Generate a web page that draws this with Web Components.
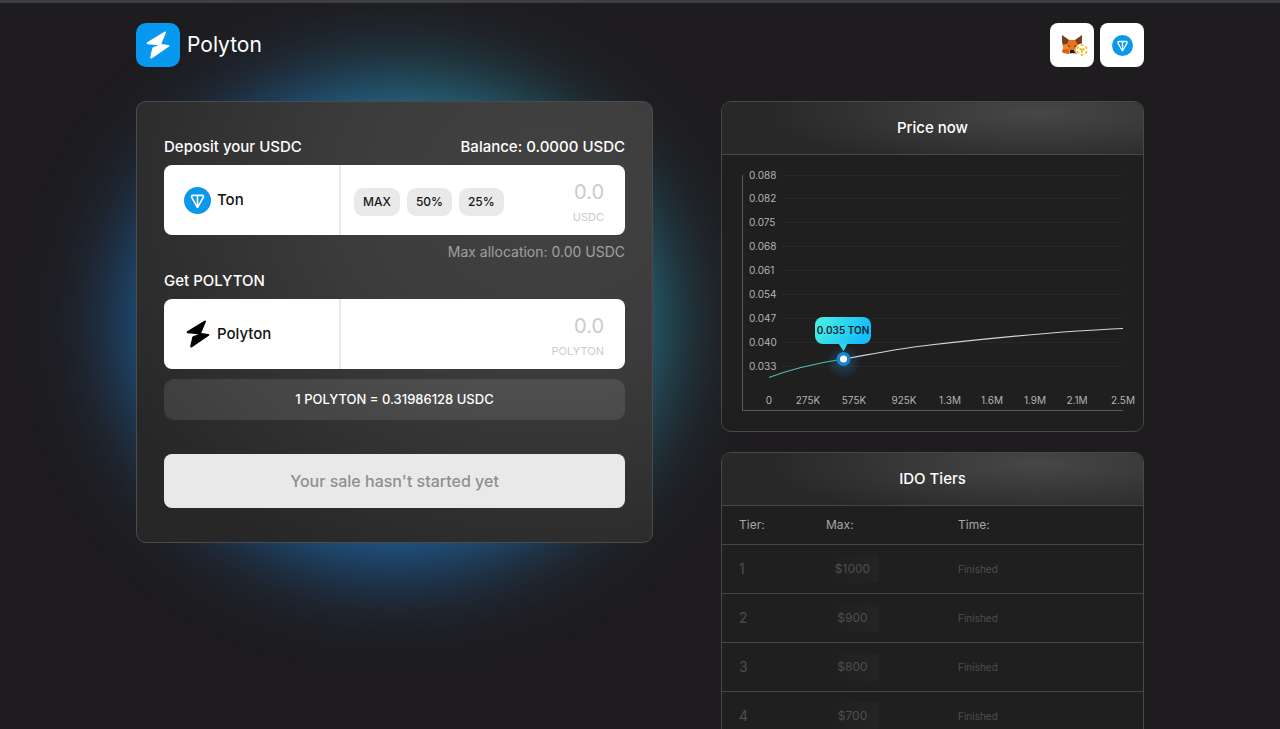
<!DOCTYPE html>
<html lang="en">
<head>
<meta charset="utf-8">
<meta name="viewport" content="width=device-width, initial-scale=1">
<title>Polyton</title>
<style>
  html { background: #1e1c1f; scrollbar-width: none; }
  body { margin: 0; font: 500 15px/24px Inter, "Open Sans", sans-serif; color: #fff; }
</style>
</head>
<body>
<polyton-app></polyton-app>

<template id="polyton-app">
  <style>
    :host { display: block; border-top: 3px solid #3f3e41; overflow: hidden; isolation: isolate; }
    .page { width: calc(100% - 48px); max-width: 1008px; margin: 0 auto; padding: 20px 0 24px; }
    main { display: grid; grid-template-columns: minmax(0, 517fr) minmax(0, 423fr); gap: 68px; align-items: start; margin-top: 34px; }
    .side { display: grid; gap: 20px; }
    @media (max-width: 760px) { main { grid-template-columns: minmax(0, 1fr); gap: 24px; } }
  </style>
  <div class="page">
    <site-header></site-header>
    <main>
      <swap-card></swap-card>
      <div class="side">
        <info-card heading="Price now"><price-chart></price-chart></info-card>
        <info-card heading="IDO Tiers"><tier-table></tier-table></info-card>
      </div>
    </main>
  </div>
</template>

<template id="site-header">
  <style>
    :host { display: block; }
    header, a, nav { display: flex; align-items: center; }
    header { justify-content: space-between; }
    a { gap: 7px; color: #fff; text-decoration: none; font-size: 21px; line-height: 28px; font-weight: 400; }
    .mark { display: grid; place-items: center; width: 44px; height: 44px; border-radius: 10px; background: #0699ef; }
    nav { gap: 6px; }
    button { display: grid; place-items: center; width: 44px; height: 44px; padding: 0; border: 0; border-radius: 8px; background: #fff; }
  </style>
  <header>
    <a href="#"><span class="mark"><bolt-icon></bolt-icon></span>Polyton</a>
    <nav aria-label="Wallets">
      <button type="button" aria-label="MetaMask">
        <svg width="32" height="24" viewBox="0 0 32 24" aria-hidden="true">
          <path d="M6 3l7 4h6l7-4v8l-1 4-2 5-4 1h-5l-4-1-4-1 1-4z" fill="#e8791f"/>
          <path d="M6 2l7 5-2 4-4 1-1-3zM26 2l-7 5 2 4 4 1 1-3z" fill="#74401f"/>
          <path d="M7 12l5-1 3 3-2 5-6-1z" fill="#f28a2c"/>
          <path d="M12 11l1-4h6l2 4-2 8h-6z" fill="#e9741f"/>
          <path d="M6 17l5-1 3 2-1 3-6-1z" fill="#d9631b"/>
          <path d="M11 12l3 1-1 1zM21 12l-3 1 1 1z" fill="#34221d"/>
          <path d="M13 18l1-1h5v4h-5z" fill="#d5c4bb"/>
          <path d="M14 17h4l1 3h-5z" fill="#1e1a1c"/>
          <circle cx="26" cy="17" r="6.500" fill="#fff"/>
          <path d="M26 11.800l4.500 2.600v5.200L26 22.200l-4.500-2.600v-5.200z" fill="none" stroke="#efb90b" stroke-width="1.300" stroke-dasharray="3.200 2" stroke-dashoffset="1.600"/>
          <path d="M23.500 15.500l2.500 1.500 2.500-1.500M26 17v3" fill="none" stroke="#efb90b" stroke-width="1.700"/>
        </svg>
      </button>
      <button type="button" aria-label="TON wallet"><ton-icon style="--size:21px"></ton-icon></button>
    </nav>
  </header>
</template>

<template id="bolt-icon">
  <style>:host { display: block; height: 28px; } svg { display: block; }</style>
  <svg width="24" height="28" viewBox="0 0 24 28" aria-hidden="true">
    <path d="M18.400.800L1.200 11.200Q-.200 12.800 1.800 13.200L12.500 14.300 7 16.200Q6.300 16.500 6.200 17.500L4.200 26.300Q4.300 28.200 6 27.300L22.800 15.800Q24.200 14.300 22.200 13.900L15.300 13 19.900 1.800Q20 0 18.400.800Z" fill="currentColor"/>
  </svg>
</template>

<template id="ton-icon">
  <style>:host { display: block; } svg { display: block; width: var(--size, 27px); height: var(--size, 27px); }</style>
  <svg viewBox="0 0 56 56" aria-hidden="true">
    <circle cx="28" cy="28" r="28" fill="#0998ea"/>
    <path d="M37.560 15.630H18.440c-3.520 0-5.750 3.790-3.980 6.860l11.800 20.460c.770 1.340 2.700 1.340 3.470 0l11.800-20.460c1.780-3.060-.450-6.860-3.970-6.860ZM26.250 36.810l-2.570-4.970-6.200-11.090c-.410-.710.100-1.620.950-1.620h7.810v17.680Zm12.260-16.060-6.200 11.100-2.570 4.960V19.130h7.810c.860 0 1.360.910.960 1.620Z" fill="#fff"/>
  </svg>
</template>

<template id="swap-card">
  <style>
    :host { display: block; position: relative; }
    .glow { position: absolute; z-index: -1; left: 50%; top: 50%; width: 520px; height: 470px; transform: translate(-50%, -50%); border-radius: 50%; background: linear-gradient(60deg, #1f72bd 45%, #2a8aa6 70%); filter: blur(50px); }
    form { border: 1px solid #4a4b4c; border-radius: 10px; padding: 33px 27px 34px; background: radial-gradient(ellipse at 80% 20%, #424242, #3c3c3c 35%, #272727 85%); }
    .note { margin: 7px 0; text-align: right; font-size: 14px; line-height: 20px; font-weight: 400; color: #a0a0a0; }
    .rate { display: block; margin-top: 10px; border-radius: 10px; background: #ffffff1a; text-align: center; font-size: 13px; line-height: 41px; }
    .submit { display: block; width: 100%; height: 54px; margin-top: 34px; padding: 0; border: 0; border-radius: 8px; background: #e9e9e9; color: #8f8f8f; font: inherit; font-size: 16px; }
  </style>
  <div class="glow"></div>
  <form>
    <token-field label="Deposit your USDC" unit="USDC" token="Ton" presets="MAX,50%,25%">
      <ton-icon slot="icon"></ton-icon>
      <span slot="aside">Balance: 0.0000 USDC</span>
    </token-field>
    <p class="note">Max allocation: 0.00 USDC</p>
    <token-field label="Get POLYTON" unit="POLYTON" token="Polyton">
      <bolt-icon slot="icon"></bolt-icon>
    </token-field>
    <output class="rate">1 POLYTON = 0.31986128 USDC</output>
    <button class="submit" type="button" disabled>Your sale hasn't started yet</button>
  </form>
</template>

<template id="token-field">
  <style>
    :host { display: block; }
    .top { display: flex; justify-content: space-between; margin-bottom: 6px; }
    .box { display: flex; height: 70px; border-radius: 8px; background: #fff; color: #111; overflow: hidden; }
    .token { display: flex; align-items: center; gap: 6px; box-sizing: border-box; width: 177px; padding-left: 20px; border-right: 2px solid #e8e8e8; }
    .icon { display: grid; place-items: center; width: 27px; color: #000; }
    .amount { flex: 1; display: flex; align-items: center; min-width: 0; padding: 4px 21px 0 13px; }
    .presets { display: flex; gap: 7px; }
    .presets button { height: 28px; padding: 0 9px; border: 0; border-radius: 9px; background: #e9e9e9; color: #161616; font: inherit; font-size: 12px; }
    .value { flex: 1; min-width: 0; display: grid; justify-items: end; color: #cbcbcb; }
    input { width: 100%; height: 30px; padding: 0; border: 0; outline: 0; background: none; text-align: right; font: inherit; font-size: 20px; font-weight: 400; color: #111; }
    input::placeholder { color: #cbcbcb; opacity: 1; }
    .unit { font-size: 11px; line-height: 20px; font-weight: 400; }
  </style>
  <div class="top"><label for="value"></label><slot name="aside"></slot></div>
  <div class="box">
    <div class="token"><span class="icon"><slot name="icon"></slot></span><span class="name"></span></div>
    <div class="amount">
      <div class="presets"></div>
      <div class="value"><input id="value" inputmode="decimal" placeholder="0.0"><span class="unit"></span></div>
    </div>
  </div>
</template>

<template id="info-card">
  <style>
    :host { display: block; border: 1px solid #48484a; border-radius: 10px; background: #1f1f1f; overflow: hidden; }
    h2 { margin: 0; border-bottom: 1px solid #48484a; text-align: center; font-size: 15px; line-height: 52px; font-weight: 500; background: radial-gradient(ellipse 65% 110% at 75% 20%, #474747, #282828); }
  </style>
  <h2></h2>
  <slot></slot>
</template>

<template id="price-chart">
  <style>
    :host { display: block; }
    svg { display: block; width: 100%; height: auto; }
    text { font-size: 10px; font-weight: 400; fill: #b4b4b4; }
    .x text { text-anchor: middle; }
    .tip { font-weight: 600; fill: #0c2730; text-anchor: middle; }
  </style>
  <svg viewBox="0 0 421 276" role="img" aria-label="Price by tokens sold">
    <defs>
      <linearGradient id="bubble" x1="0" y1="0" x2="1" y2="0.300"><stop stop-color="#4bf3df"/><stop offset="1" stop-color="#16bdfa"/></linearGradient>
      <radialGradient id="halo"><stop stop-color="#1d87d0" stop-opacity=".4"/><stop offset="1" stop-color="#1d87d0" stop-opacity="0"/></radialGradient>
    </defs>
    <g class="grid" stroke="#272727"></g>
    <path d="M20.500 20V255.500H401" fill="none" stroke="#5a5a5a"/>
    <g class="y"></g>
    <g class="x"></g>
    <path d="M121 204C150 199 180 193 208 190C270 183 340 176 401 173.500" fill="none" stroke="#d6d6d6" stroke-width="1.200"/>
    <path d="M47 222.500C72 213 96 208 121 204" fill="none" stroke="#4cc5b4" stroke-width="1.200"/>
    <circle cx="121.500" cy="207" r="17" fill="url(#halo)"/>
    <rect x="93" y="162" width="56" height="27" rx="8" fill="url(#bubble)"/>
    <path d="M116.500 188.500h9l-3.500 7q-.500 1-1 0z" fill="#2cd6f1"/>
    <circle cx="121.500" cy="204" r="7" fill="#1d84cb"/>
    <circle cx="121.500" cy="204" r="3.500" fill="#fff"/>
    <text class="tip" x="121" y="179">0.035 TON</text>
  </svg>
</template>

<template id="tier-table">
  <style>
    :host { display: block; }
    table { width: 100%; border-collapse: separate; border-spacing: 0; table-layout: fixed; }
    th, td { box-sizing: border-box; padding: 0; text-align: left; border-bottom: 1px solid #454545; }
    th { height: 39px; font-size: 12px; font-weight: 400; color: #a6a6a6; }
    td { height: 49px; font-size: 14px; font-weight: 400; color: #4e4e4e; }
    th:first-child, td:first-child { width: 104px; padding-left: 17px; }
    th:nth-child(2) { width: 132px; }
    td:last-child { font-size: 10px; }
    .max { display: block; width: 53px; border-radius: 4px; text-align: center; font-size: 12px; line-height: 28px; background: linear-gradient(90deg, #1f1f1f, #242424); }
  </style>
  <table>
    <thead><tr><th scope="col">Tier:</th><th scope="col">Max:</th><th scope="col">Time:</th></tr></thead>
    <tbody></tbody>
  </table>
</template>

<script>
  class TemplateElement extends HTMLElement {
    constructor() {
      super();
      const template = document.getElementById(this.localName);
      this.attachShadow({ mode: "open" }).append(template.content.cloneNode(true));
    }
    find(selector) { return this.shadowRoot.querySelector(selector); }
  }

  class TokenField extends TemplateElement {
    connectedCallback() {
      this.find("label").textContent = this.getAttribute("label");
      this.find(".name").textContent = this.getAttribute("token");
      this.find(".unit").textContent = this.getAttribute("unit");
      const presets = (this.getAttribute("presets") || "").split(",").filter(Boolean);
      this.find(".presets").replaceChildren(...presets.map(text => {
        const button = document.createElement("button");
        button.type = "button";
        button.textContent = text;
        return button;
      }));
    }
  }

  class InfoCard extends TemplateElement {
    connectedCallback() { this.find("h2").textContent = this.getAttribute("heading"); }
  }

  class PriceChart extends TemplateElement {
    connectedCallback() {
      const prices = [["0.088", 20], ["0.082", 43], ["0.075", 67], ["0.068", 91], ["0.061", 115], ["0.054", 139], ["0.047", 163], ["0.040", 187], ["0.033", 211]];
      const amounts = [["0", 47], ["275K", 86], ["575K", 132], ["925K", 182], ["1.3M", 228], ["1.6M", 270], ["1.9M", 313], ["2.1M", 355], ["2.5M", 401]];
      this.find(".grid").innerHTML = prices.map(([, y]) => `<path d="M60 ${y}.5H401"/>`).join("");
      this.find(".y").innerHTML = prices.map(([t, y]) => `<text x="27" y="${y + 4}">${t}</text>`).join("");
      this.find(".x").innerHTML = amounts.map(([t, x]) => `<text x="${x}" y="249">${t}</text>`).join("");
    }
  }

  class TierTable extends TemplateElement {
    connectedCallback() {
      this.find("tbody").innerHTML = [1000, 900, 800, 700].map((max, i) =>
        `<tr><td>${i + 1}</td><td><span class="max">$${max}</span></td><td>Finished</td></tr>`).join("");
    }
  }

  customElements.define("bolt-icon", class extends TemplateElement {});
  customElements.define("ton-icon", class extends TemplateElement {});
  customElements.define("token-field", TokenField);
  customElements.define("info-card", InfoCard);
  customElements.define("price-chart", PriceChart);
  customElements.define("tier-table", TierTable);
  customElements.define("site-header", class extends TemplateElement {});
  customElements.define("swap-card", class extends TemplateElement {});
  customElements.define("polyton-app", class extends TemplateElement {});
</script>
</body>
</html>
